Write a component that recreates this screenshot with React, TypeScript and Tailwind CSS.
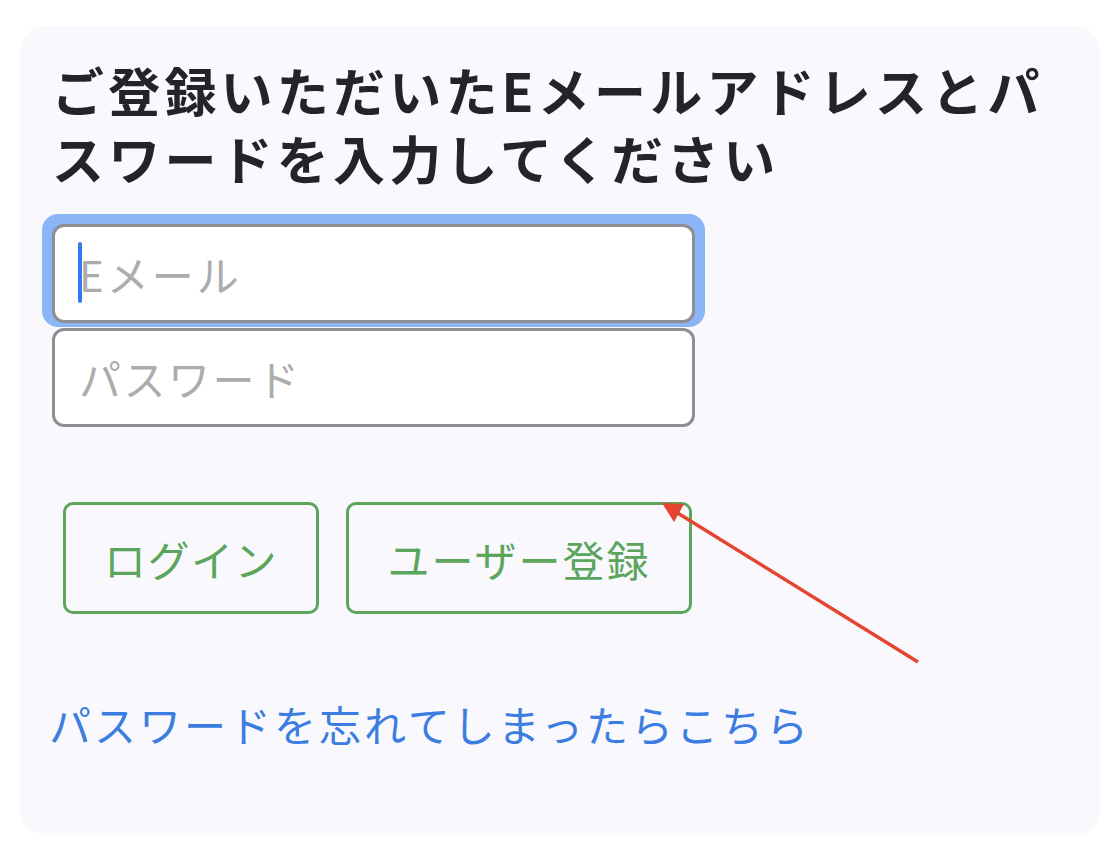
import React from "react";

export default function App() {
  const font = { fontFamily: '"Noto Sans CJK JP", "Noto Sans", sans-serif' };
  return (
    <div className="w-[1119px] h-[868px] bg-white relative" style={font}>
      <div className="absolute left-[20px] top-[26px] w-[1080px] h-[809px] rounded-[26px] bg-[#f8f8fd]">
        <div className="pl-[32px] pt-[30px] flex flex-col">
          <h1 className="text-[52px] leading-[68px] font-bold text-[#222428] tracking-[4.2px]">
            ご登録いただいたEメールアドレスとパ<br />スワードを入力してください
          </h1>
          <div className="mt-[22px] ml-[-10px] w-[663px] rounded-[16px] p-[10px] pb-[4px] bg-[#8ab6f7]">
            <div className="h-[99px] rounded-[12px] border-[3px] border-[#8e8e93] bg-white flex items-center pl-[24px] relative">
              <div className="absolute left-[23px] top-[15px] w-[4px] h-[61px] rounded-full bg-[#3478f6]" />
              <span className="text-[42px] text-[#acacac] tracking-[3px]">Eメール</span>
            </div>
          </div>
          <div className="ml-0 mt-[1px] w-[643px] h-[99px] rounded-[12px] border-[3px] border-[#8e8e93] bg-white flex items-center pl-[24px]">
            <span className="text-[42px] text-[#acacac] tracking-[2.5px]">パスワード</span>
          </div>
          <div className="flex gap-[27px] mt-[75px] ml-[11px]">
            <div className="w-[256px] h-[112px] rounded-[10px] border-[3px] border-[#5ca55c] flex items-center justify-center text-[42px] text-[#5ca55c] tracking-[1.5px]">
              ログイン
            </div>
            <div className="w-[346px] h-[112px] rounded-[10px] border-[3px] border-[#5ca55c] flex items-center justify-center text-[42px] text-[#5ca55c] tracking-[2px]">
              ユーザー登録
            </div>
          </div>
          <div className="mt-[84px] ml-[-3px] text-[42px] leading-[52px] text-[#3b7de0] tracking-[3px]">
            パスワードを忘れてしまったらこちら
          </div>
        </div>
      </div>
      <svg className="absolute left-0 top-0" width="1119" height="868">
        <line x1="918" y1="662" x2="676" y2="512" stroke="#e5452f" strokeWidth="3.5" />
        <polygon points="662,503 684,504 674,522" fill="#e5452f" />
      </svg>
    </div>
  );
}
